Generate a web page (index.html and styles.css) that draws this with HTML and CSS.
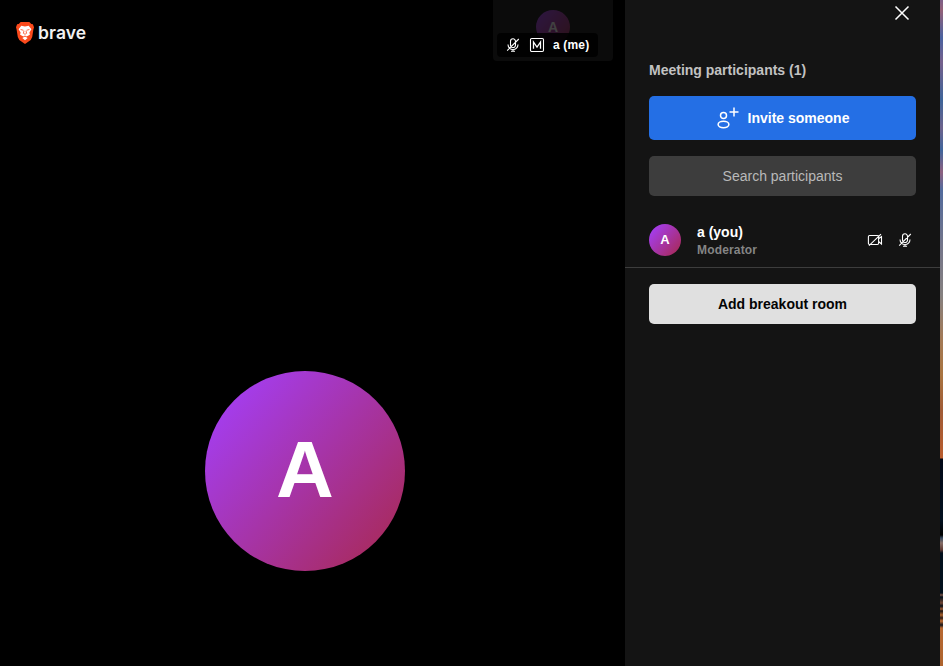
FILE: index.html
```html
<!DOCTYPE html>
<html lang="en">
<head>
<meta charset="utf-8">
<title>Meeting</title>
<link rel="stylesheet" href="styles.css">
</head>
<body>
<svg class="defs" aria-hidden="true">
  <symbol id="mic-off" viewBox="0 0 16 16">
    <path d="M5.500 8V4.300a2.500 2.500 0 0 1 5 0v3.700a2.500 2.500 0 0 1-5 0zM3 7.500a5 5 0 0 0 10 0M8 12.300v2M6 14.300h4M13.800 2L2.200 13.600"/>
  </symbol>
  <symbol id="camera-off" viewBox="0 0 16 16">
    <path d="M2.600 3.500h7.800q1.200 0 1.200 1.200v6.600q0 1.200-1.200 1.200H2.600q-1.200 0-1.200-1.200V4.700q0-1.200 1.200-1.200zM11.600 6.700l2.900-2.200v7.500l-2.900-2.500M14 2.200L2 13.600"/>
  </symbol>
</svg>
<div class="app">
  <main class="stage">
    <div class="brand">
      <svg class="lion" viewBox="0 0 18 22">
        <path fill="#fb4a1c" d="M4.700 0h8.600l2 2.100 1.600.1 1.100 3-.6 2.200-1.200 7.500-1.500 3L9 22l-5.700-4.100-1.500-3L.6 7.400 0 5.200l1.100-3 1.600-.1z"/>
        <path fill="#fff" d="M5.300 3.800L9 4.600l3.700-.8 2.700 3.500-2 3.300.5 2.200-3.300 1.700L9 13.600l-1.600.9-3.300-1.700.5-2.200-2-3.300z"/>
        <path fill="#fff" d="M9 14.500l2.700 1.500L9 18.200 6.300 16z"/>
        <path fill="none" stroke="#fb4a1c" stroke-width=".8" d="M4.600 7.500l2.900.8M13.400 7.500l-2.900.8M8 8.800l-.6 2.500L9 12.300l1.600-1L10 8.800"/>
      </svg>
      <span class="brand-name">brave</span>
    </div>
    <div class="speaker avatar">A</div>
    <div class="thumb">
      <div class="thumb-avatar avatar">A</div>
      <div class="label">
        <svg class="icon"><use href="#mic-off"/></svg>
        <svg class="icon" viewBox="0 0 16 16"><rect x="1.500" y="1.500" width="13" height="13" rx="1.200"/><path class="letter-m" d="M4.500 11.800V5L8 10l3.500-5v6.800"/></svg>
        <span>a (me)</span>
      </div>
    </div>
  </main>
  <aside class="panel">
    <header class="head">
      <svg class="close" viewBox="0 0 16 16"><path d="M1.500 1.500l13 13M14.500 1.500l-13 13"/></svg>
    </header>
    <h2 class="title">Meeting participants (1)</h2>
    <button class="btn invite">
      <svg class="add" viewBox="0 0 24 24"><circle cx="7.500" cy="9.500" r="3"/><ellipse cx="7.500" cy="18.500" rx="5.400" ry="3.200"/><path d="M18 1.500v9M13.500 6h9"/></svg>
      <span>Invite someone</span>
    </button>
    <input class="search" placeholder="Search participants">
    <div class="person">
      <div class="small avatar">A</div>
      <div class="who"><div class="name">a (you)</div><div class="role">Moderator</div></div>
      <svg class="icon"><use href="#camera-off"/></svg>
      <svg class="icon"><use href="#mic-off"/></svg>
    </div>
    <button class="btn breakout">Add breakout room</button>
  </aside>
  <div class="backdrop"></div>
</div>
</body>
</html>
```
FILE: styles.css
```css
* { box-sizing: border-box; }
body { margin: 0; background: #000; color: #fff; font-family: "Liberation Sans", Arial, sans-serif; font-size: 14px; }
.defs { position: absolute; width: 0; height: 0; }
.app { display: flex; height: 666px; overflow: hidden; }
.stage { position: relative; width: 625px; padding-top: 22px; }
.brand { display: flex; align-items: center; height: 22px; margin-left: 16px; gap: 4px; }
.lion { width: 18px; height: 22px; }
.brand-name { font: 600 17.500px/20px Inter, sans-serif; letter-spacing: .1px; color: #f2f2f2; }
.avatar { display: flex; align-items: center; justify-content: center; border-radius: 50%; font-weight: 700; background: linear-gradient(130deg, #a43dee 12%, #a82b62 88%); }
.speaker { width: 200px; height: 200px; margin: 327px 0 0 205px; font-size: 80px; padding-bottom: 2px; }
.thumb { position: absolute; left: 493px; top: 0; width: 120px; height: 61px; border-radius: 0 0 4px 4px; background: #0b0b0b; padding: 33px 4px 4px; }
.thumb-avatar { position: absolute; left: 43px; top: 10px; width: 34px; height: 34px; font-size: 14px; opacity: .22; }
.label { position: relative; display: flex; align-items: center; gap: 8px; width: 101px; height: 24px; padding-left: 8px; border-radius: 4px; background: rgba(0, 0, 0, .85); font-size: 12px; font-weight: 700; letter-spacing: .16px; }
.icon { width: 16px; height: 16px; fill: none; stroke: #fff; stroke-width: 1.100; flex: none; }
.letter-m { stroke-width: 1.300; }
.panel { width: 315px; padding: 0 24px; background: #141414; }
.head { display: flex; justify-content: flex-end; height: 60px; padding: 5px 6px 0 0; }
.close { width: 16px; height: 16px; fill: none; stroke: #fff; stroke-width: 1.500; }
.title { margin: 0; height: 36px; font-size: 14px; line-height: 20px; color: #c2c2c2; }
.btn, .search { display: flex; width: 267px; border: 0; border-radius: 5px; align-items: center; justify-content: center; font: 700 14px/20px "Liberation Sans", Arial, sans-serif; }
.invite { height: 44px; gap: 8px; padding: 0; color: #fff; background: #246fe5; }
.add { width: 24px; height: 24px; fill: none; stroke: #fff; stroke-width: 1.500; }
.search { height: 40px; margin-top: 16px; background: #3d3d3d; color: #fff; text-align: center; font-weight: 400; }
.search::placeholder { color: #b9b9b9; opacity: 1; }
.person { display: flex; align-items: center; height: 56px; margin: 16px -24px 16px; padding: 0 27px 0 24px; border-bottom: 1px solid #3d3d3d; gap: 14px; }
.small { width: 32px; height: 32px; font-size: 13px; }
.who { flex: 1; margin-left: 2px; }
.name { line-height: 20px; font-weight: 700; }
.role { font-size: 12px; font-weight: 700; line-height: 16px; letter-spacing: .16px; color: #858585; }
.breakout { height: 40px; background: #e0e0e0; color: #040404; }
.backdrop { width: 3px; background: linear-gradient(180deg, #7d5f87 0, #936078 10px, #4a62a0 38px, #75608c 62px, #3e6499 100px, #6c628c 128px, #40659c 150px, #8d6080 172px, #526b9d 190px, #73758a 245px, #858080 295px, #a37955 340px, #a97440 375px, #a05b36 410px, #b95c2d 458px, #020817 459px, #02101f 520px, #000 535px, #34485e 538px, #866d66 543px, #5d3933 550px, #02101c 553px, #02101c 593px, #785245 595px, #02101c 597px, #6f4533 603px, #080e16 606px, #9b5b35 609px, #191414 611px, #a9612d 615px, #2b1c19 618px, #c06c31 621px, #14151c 625px, #b76831 628px, #ad632e 666px); }
```
